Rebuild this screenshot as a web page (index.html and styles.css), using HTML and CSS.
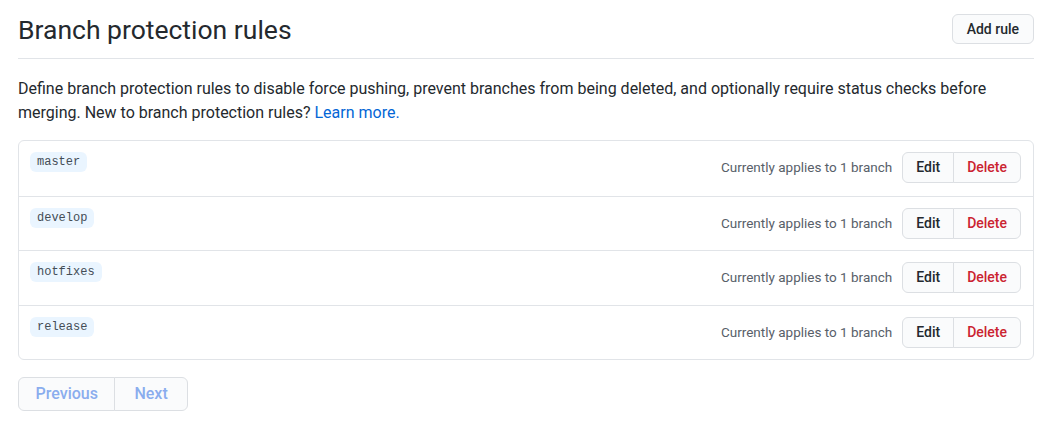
FILE: index.html
```html
<!DOCTYPE html>
<html lang="en">
<head>
<meta charset="utf-8">
<title>Branch protection rules</title>
<link rel="stylesheet" href="styles.css">
</head>
<body>
<div class="page">
  <div class="subhead">
    <h2 class="subhead-title">Branch protection rules</h2>
    <button class="btn btn-add">Add rule</button>
  </div>
  <p class="intro">Define branch protection rules to disable force pushing, prevent branches from being deleted, and optionally require status checks before merging. New to branch protection rules? <a href="#">Learn more.</a></p>
  <div class="box">
    <div class="box-row">
      <code class="branch">master</code>
      <div class="row-actions">
        <span class="applies">Currently applies to 1 branch</span>
        <div class="btn-group">
          <button class="btn">Edit</button><button class="btn btn-danger">Delete</button>
        </div>
      </div>
    </div>
    <div class="box-row">
      <code class="branch">develop</code>
      <div class="row-actions">
        <span class="applies">Currently applies to 1 branch</span>
        <div class="btn-group">
          <button class="btn">Edit</button><button class="btn btn-danger">Delete</button>
        </div>
      </div>
    </div>
    <div class="box-row">
      <code class="branch">hotfixes</code>
      <div class="row-actions">
        <span class="applies">Currently applies to 1 branch</span>
        <div class="btn-group">
          <button class="btn">Edit</button><button class="btn btn-danger">Delete</button>
        </div>
      </div>
    </div>
    <div class="box-row">
      <code class="branch">release</code>
      <div class="row-actions">
        <span class="applies">Currently applies to 1 branch</span>
        <div class="btn-group">
          <button class="btn">Edit</button><button class="btn btn-danger">Delete</button>
        </div>
      </div>
    </div>
  </div>
  <div class="pagination">
    <span class="page-link disabled">Previous</span><span class="page-link disabled">Next</span>
  </div>
</div>
</body>
</html>
```

FILE: styles.css
```css
* { box-sizing: border-box; }
html, body { margin: 0; padding: 0; background: #fff; }
body {
  font-family: Roboto, "Noto Sans", sans-serif;
  font-size: 14px;
  line-height: 1.5;
  color: #24292e;
}
.page {
  padding: 14px 25px 0 18px;
}
.subhead {
  display: flex;
  align-items: flex-start;
  justify-content: space-between;
  height: 45px;
  border-bottom: 1px solid #e1e4e8;
}
.subhead-title {
  margin: 1px 0 0;
  font-size: 26.5px;
  font-weight: 400;
  line-height: 30px;
  color: #24292e;
}
.btn {
  font-family: inherit;
  font-size: 14px;
  font-weight: 500;
  color: #24292e;
  background: #fafbfc;
  border: 1px solid #dcdfe3;
  border-radius: 6px;
  cursor: pointer;
}
.btn-add {
  height: 30px;
  padding: 0 14px;
  line-height: 28px;
}
.intro {
  margin: 18px 0 15px;
  font-size: 16px;
  line-height: 24px;
}
.intro a { color: #0366d6; text-decoration: none; }
.box {
  border: 1px solid #e1e4e8;
  border-radius: 6px;
}
.box-row {
  display: flex;
  justify-content: space-between;
  align-items: flex-start;
  padding: 11px 12px 0 11px;
  border-top: 1px solid #e1e4e8;
  height: 54.5px;
}
.box-row:first-child { border-top: 0; }
.branch {
  font-family: "Liberation Mono", "DejaVu Sans Mono", monospace;
  font-size: 12px;
  line-height: 20px;
  padding: 0 7px;
  color: #444d56;
  background: #eaf5ff;
  border-radius: 6px;
}
.row-actions {
  display: flex;
  align-items: center;
  gap: 10px;
}
.applies {
  color: #586069;
  font-size: 13.5px;
}
.btn-group { display: flex; }
.btn-group .btn {
  height: 31px;
  padding: 0 13px;
  line-height: 29px;
}
.btn-group .btn:first-child { border-radius: 6px 0 0 6px; }
.btn-group .btn:last-child { border-radius: 0 6px 6px 0; margin-left: -1px; }
.btn-danger { color: #cb2431; }
.pagination {
  display: flex;
  margin-top: 17px;
}
.page-link {
  display: inline-block;
  height: 34px;
  padding: 0 16.5px;
  line-height: 32px;
  font-size: 16px;
  font-weight: 500;
  color: #8aadee;
  background: #fafbfc;
  border: 1px solid #dcdfe3;
}
.page-link:first-child { border-radius: 6px 0 0 6px; }
.page-link:last-child { border-radius: 0 6px 6px 0; margin-left: -1px; padding: 0 19px; }
```
